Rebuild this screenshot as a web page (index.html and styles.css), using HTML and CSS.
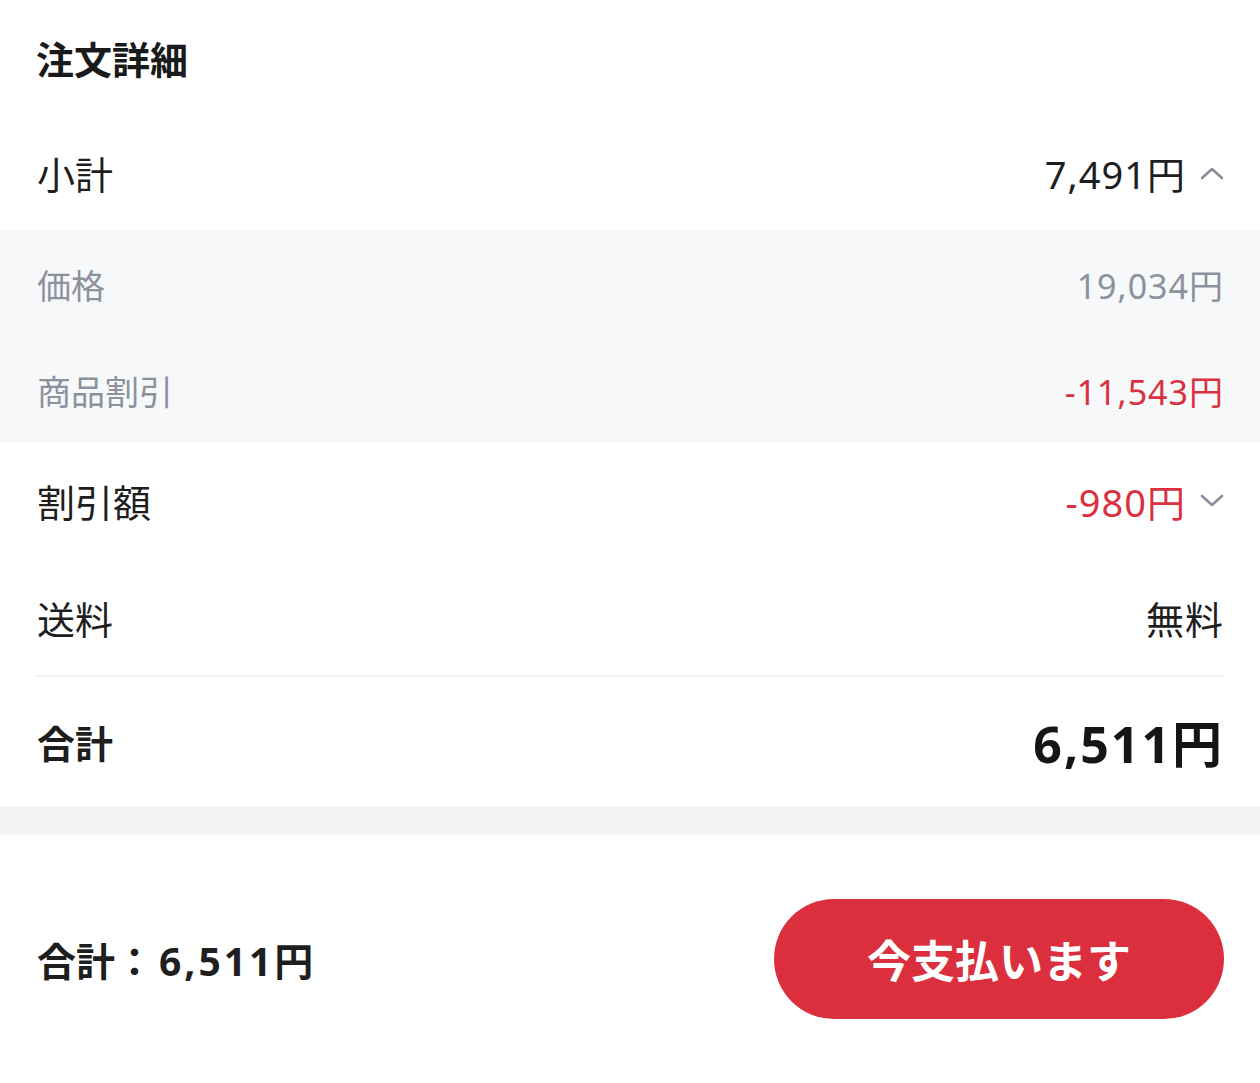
FILE: index.html
```html
<!DOCTYPE html>
<html lang="ja">
<head>
    <meta charset="UTF-8">
    <meta name="viewport" content="width=device-width, initial-scale=1.0">
    <title>注文詳細</title>
    <link rel="stylesheet" href="styles.css">
</head>
<body>

    <div class="order-detail">
        <h1 class="title">注文詳細</h1>

        <div class="row row-subtotal">
            <span class="label">小計</span>
            <span class="value">7,491円
                <svg class="chevron" viewBox="0 0 24 14" width="24" height="14"><polyline points="2,12 12,3 22,12"/></svg>
            </span>
        </div>

        <div class="breakdown">
            <div class="row sub-row">
                <span class="label">価格</span>
                <span class="value">19,034円</span>
            </div>
            <div class="row sub-row">
                <span class="label">商品割引</span>
                <span class="value red">-11,543円</span>
            </div>
        </div>

        <div class="row row-discount">
            <span class="label">割引額</span>
            <span class="value red">-980円
                <svg class="chevron" viewBox="0 0 24 14" width="24" height="14"><polyline points="2,3 12,12 22,3"/></svg>
            </span>
        </div>

        <div class="row row-shipping">
            <span class="label">送料</span>
            <span class="value">無料</span>
        </div>

        <div class="row row-total">
            <span class="label bold">合計</span>
            <span class="value total-amount">6,511円</span>
        </div>
    </div>

    <div class="spacer-band"></div>

    <div class="pay-bar">
        <div class="pay-total">合計：<span class="num">6,511円</span></div>
        <button class="pay-button">今支払います</button>
    </div>

</body>
</html>
```

FILE: styles.css
```css
body {
    margin: 0;
    background-color: #fff;
    color: #1e1e1e;
    font-family: "Noto Sans", "Noto Sans CJK JP", sans-serif;
}
.title {
    margin: 0;
    height: 114px;
    padding: 0 36px 4px;
    display: flex;
    align-items: center;
    font-size: 38px;
    font-weight: bold;
    color: #1a1a1a;
}
.row {
    display: flex;
    justify-content: space-between;
    align-items: center;
    padding: 0 36px 0 37px;
    font-size: 38px;
}
.row .value {
    display: flex;
    align-items: center;
    gap: 14px;
    letter-spacing: 1px;
}
.row-subtotal {
    height: 109px;
    padding-bottom: 4px;
}
.breakdown {
    background-color: #f7f8fa;
}
.sub-row {
    height: 106px;
    font-size: 34px;
    color: #8d919d;
}
.row-discount {
    height: 116px;
    padding-bottom: 2px;
    box-sizing: border-box;
}
.row-shipping {
    height: 116px;
    margin: 0 36px;
    padding: 0 0 0 1px;
    border-bottom: 2px solid #f3f3f3;
}
.row-total {
    height: 129px;
}
.bold {
    font-weight: bold;
}
.row .total-amount {
    font-size: 50px;
    font-weight: bold;
    color: #151515;
    letter-spacing: 2px;
}
.red {
    color: #d9313f;
}
.chevron {
    fill: none;
    stroke: #8b8f9b;
    stroke-width: 2.6;
    stroke-linecap: round;
    stroke-linejoin: round;
}
.spacer-band {
    height: 29px;
    background-color: #f4f4f4;
}
.pay-bar {
    height: 248px;
    display: flex;
    justify-content: space-between;
    align-items: center;
    padding: 0 36px 0 37px;
}
.pay-total {
    font-size: 39px;
    font-weight: bold;
    color: #1e1e1e;
}
.pay-total .num {
    margin-left: 5px;
    letter-spacing: 3px;
}
.pay-button {
    width: 450px;
    height: 120px;
    border: none;
    border-radius: 60px;
    background-color: #dc2f3d;
    color: #fff;
    font-family: "Noto Sans CJK JP", sans-serif;
    font-size: 44px;
    font-weight: bold;
    cursor: pointer;
}
```
